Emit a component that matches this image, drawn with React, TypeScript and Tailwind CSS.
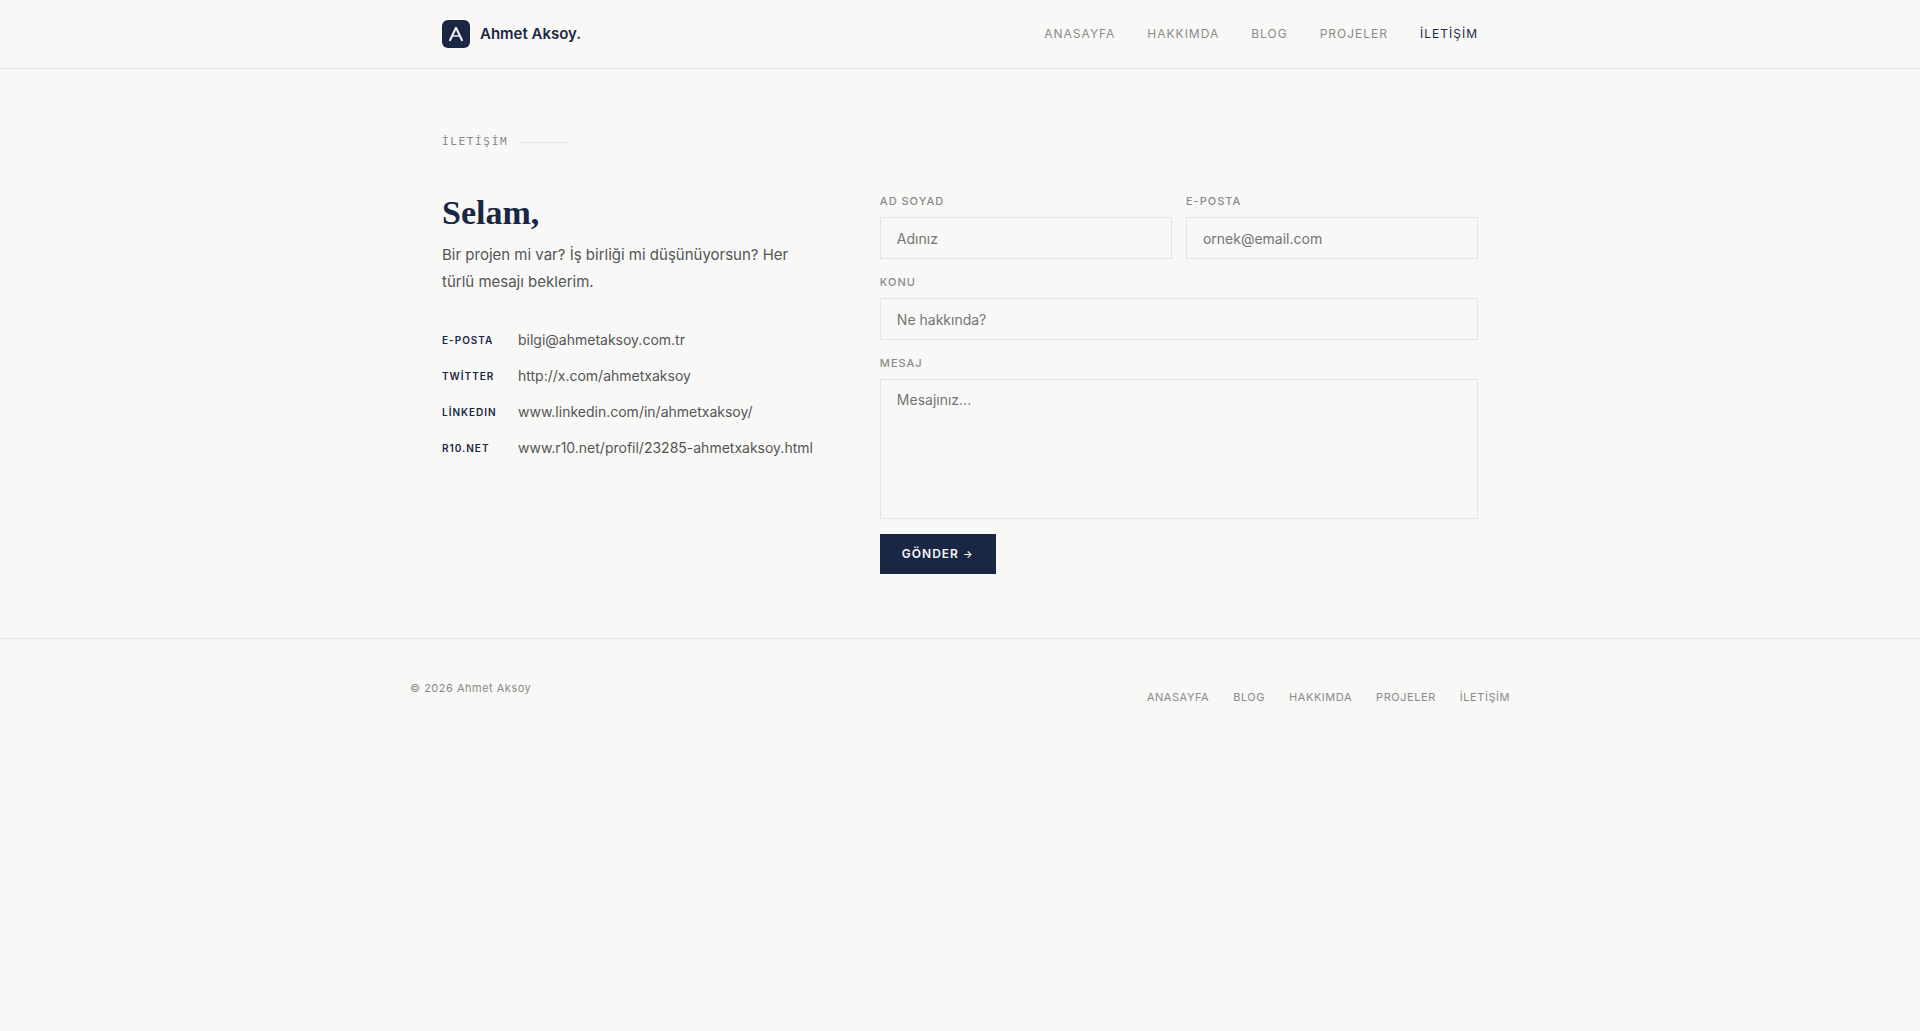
import React from "react";

const navLinks = ["ANASAYFA", "HAKKIMDA", "BLOG", "PROJELER", "İLETİŞİM"];
const footerLinks = ["ANASAYFA", "BLOG", "HAKKIMDA", "PROJELER", "İLETİŞİM"];

const contacts = [
  { label: "E-POSTA", value: "bilgi@ahmetaksoy.com.tr", href: "mailto:bilgi@ahmetaksoy.com.tr" },
  { label: "TWİTTER", value: "http://x.com/ahmetxaksoy", href: "http://x.com/ahmetxaksoy" },
  { label: "LİNKEDIN", value: "www.linkedin.com/in/ahmetxaksoy/", href: "https://www.linkedin.com/in/ahmetxaksoy/" },
  {
    label: "R10.NET",
    value: "www.r10.net/profil/23285-ahmetxaksoy.html",
    href: "https://www.r10.net/profil/23285-ahmetxaksoy.html",
  },
];

const fieldClass =
  "w-full border border-[#e4e4e2] bg-transparent px-4 text-[14px] leading-5 text-[#555555] placeholder:text-[#757575] outline-none focus:border-[#1a2744]";

function Logo() {
  return (
    <a href="#" className="flex items-center gap-2.5 text-[15px] font-semibold text-[#1a2744]">
      <svg width="28" height="28" viewBox="0 0 28 28" fill="none" aria-hidden="true">
        <rect width="28" height="28" rx="6" fill="#1a2744" />
        <path d="M8 20.2 14 7.8 20 20.2" stroke="#f8f8f6" strokeWidth="2" strokeLinecap="round" strokeLinejoin="round" />
        <path d="M10.4 16h7.2" stroke="#f8f8f6" strokeOpacity="0.8" strokeWidth="1.8" />
      </svg>
      <span>Ahmet Aksoy.</span>
    </a>
  );
}

function Field({ id, label, children }: { id: string; label: string; children: React.ReactNode }) {
  return (
    <div className="flex flex-col">
      <label htmlFor={id} className="mb-2 text-[11px] leading-4 font-medium tracking-[1px] text-[#8a8a8a]">
        {label}
      </label>
      {children}
    </div>
  );
}

export default function App() {
  return (
    <div className="min-h-screen bg-[#f8f8f6] font-['Inter',sans-serif] text-[#555555]">
      <header className="border-b border-[#e4e4e2]">
        <div className="mx-auto flex h-17 max-w-[1100px] items-center justify-between px-8">
          <Logo />
          <nav className="flex gap-8 text-[12px] tracking-[1px]">
            {navLinks.map((item) => (
              <a key={item} href="#" className={item === "İLETİŞİM" ? "text-[#1a2744]" : "text-[#8a8a8a]"}>
                {item}
              </a>
            ))}
          </nav>
        </div>
      </header>

      <main className="mx-auto max-w-[1100px] px-8 py-16">
        <div className="mb-[42px] flex items-center gap-3">
          <p className="font-['DejaVu_Sans_Mono',monospace] text-[11px] leading-[18px] tracking-[0.15em] text-[#8a8a8a]">
            İLETİŞİM
          </p>
          <span className="h-px w-12 bg-[#e4e4e2]" />
        </div>

        <div className="grid grid-cols-[1fr_1.6fr] gap-16">
          <section>
            <h1 className="mb-2 font-['Liberation_Serif',serif] text-[34px] leading-10 font-bold text-[#1a2744]">
              Selam,
            </h1>
            <p className="mb-[35px] text-[15px] leading-[27px]">
              Bir projen mi var? İş birliği mi düşünüyorsun? Her türlü mesajı beklerim.
            </p>
            <ul className="flex flex-col gap-4">
              {contacts.map((c) => (
                <li key={c.label} className="flex items-center gap-4">
                  <span className="w-15 shrink-0 text-[10px] leading-5 font-semibold tracking-[1px] text-[#1a2744]">
                    {c.label}
                  </span>
                  <a href={c.href} className="text-[14px] leading-5 whitespace-nowrap">
                    {c.value}
                  </a>
                </li>
              ))}
            </ul>
          </section>

          <form className="flex flex-col gap-[15px]" onSubmit={(e) => e.preventDefault()}>
            <div className="grid grid-cols-2 gap-3.5">
              <Field id="name" label="AD SOYAD">
                <input id="name" type="text" placeholder="Adınız" className={`${fieldClass} h-[42px]`} />
              </Field>
              <Field id="email" label="E-POSTA">
                <input id="email" type="email" placeholder="ornek@email.com" className={`${fieldClass} h-[42px]`} />
              </Field>
            </div>
            <Field id="subject" label="KONU">
              <input id="subject" type="text" placeholder="Ne hakkında?" className={`${fieldClass} h-[42px]`} />
            </Field>
            <Field id="message" label="MESAJ">
              <textarea id="message" placeholder="Mesajınız..." className={`${fieldClass} h-35 resize-none py-2.5`} />
            </Field>
            <button
              type="submit"
              className="h-10 self-start bg-[#1a2744] px-5.5 text-[12px] font-semibold tracking-[1px] text-[#f8f8f6]"
            >
              GÖNDER <span className="text-[10px]">→</span>
            </button>
          </form>
        </div>
      </main>

      <footer className="border-t border-[#e4e4e2] py-10">
        <div className="mx-auto flex max-w-[1100px] items-start justify-between">
          <p className="text-[11px] leading-[18px] tracking-[0.5px] text-[#8a8a8a]">© 2026 Ahmet Aksoy</p>
          <nav className="flex gap-6 pt-2 text-[11px] leading-5 tracking-wider text-[#8a8a8a]">
            {footerLinks.map((item) => (
              <a key={item} href="#">
                {item}
              </a>
            ))}
          </nav>
        </div>
      </footer>
    </div>
  );
}
